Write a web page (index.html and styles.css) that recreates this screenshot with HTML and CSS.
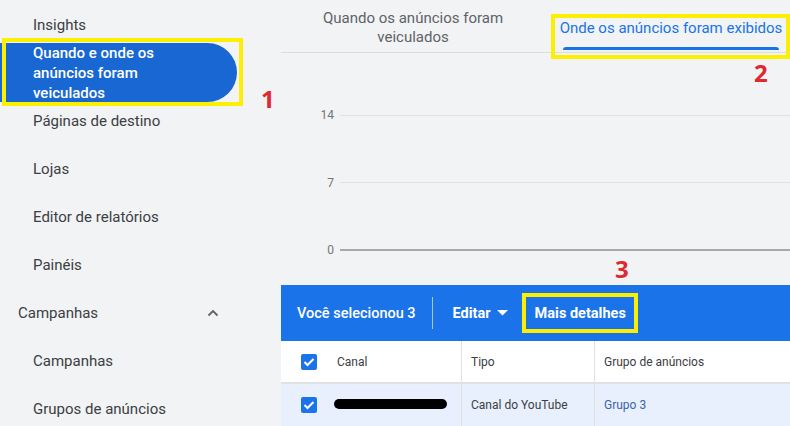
FILE: index.html
```html
<!DOCTYPE html>
<html lang="pt-BR">
<head>
<meta charset="utf-8">
<title>Quando e onde os anúncios foram veiculados</title>
<link rel="stylesheet" href="styles.css">
</head>
<body>
<div class="app">
  <nav class="sidebar">
    <div class="nav-item first">Insights</div>
    <div class="nav-item active">Quando e onde os<br>anúncios foram<br>veiculados</div>
    <div class="nav-item after-active">Páginas de destino</div>
    <div class="nav-item">Lojas</div>
    <div class="nav-item">Editor de relatórios</div>
    <div class="nav-item">Painéis</div>
    <div class="nav-item section"><span>Campanhas</span>
      <svg class="chev" width="12" height="8" viewBox="0 0 12 8"><path d="M1.5 6.5 L6 2 L10.5 6.5" fill="none" stroke="#5f6368" stroke-width="1.8"/></svg>
    </div>
    <div class="nav-item">Campanhas</div>
    <div class="nav-item">Grupos de anúncios</div>
  </nav>

  <main class="main">
    <div class="tabs">
      <div class="tab">Quando os anúncios foram<br>veiculados</div>
      <div class="tab tab-active"><span class="tab-label">Onde os anúncios foram exibidos</span><span class="indicator"></span></div>
    </div>

    <div class="chart">
      <div class="grid-row"><span class="axis">14</span><span class="gridline"></span></div>
      <div class="grid-row"><span class="axis">7</span><span class="gridline"></span></div>
      <div class="grid-row"><span class="axis">0</span><span class="gridline base"></span></div>
    </div>

    <div class="actionbar">
      <span class="selected">Você selecionou 3</span>
      <span class="vdivider"></span>
      <span class="edit">Editar
        <svg width="11" height="6" viewBox="0 0 11 6"><path d="M0 0 H11 L5.5 5.5 Z" fill="#fff"/></svg>
      </span>
      <span class="details">Mais detalhes</span>
    </div>

    <div class="table">
      <div class="trow thead">
        <div class="cell first-cell"><span class="cbox"><svg width="12" height="10" viewBox="0 0 12 10"><path d="M1.5 5 L4.5 8 L10.5 2" fill="none" stroke="#fff" stroke-width="2"/></svg></span><span>Canal</span></div>
        <div class="cell">Tipo</div>
        <div class="cell">Grupo de anúncios</div>
      </div>
      <div class="trow tbody">
        <div class="cell first-cell"><span class="cbox"><svg width="12" height="10" viewBox="0 0 12 10"><path d="M1.5 5 L4.5 8 L10.5 2" fill="none" stroke="#fff" stroke-width="2"/></svg></span><span class="redact"></span></div>
        <div class="cell">Canal do YouTube</div>
        <div class="cell link">Grupo 3</div>
      </div>
    </div>
  </main>

  <div class="mark mark-1"></div>
  <div class="mark mark-2"></div>
  <div class="mark mark-3"></div>
  <span class="num num-1">1</span>
  <span class="num num-2">2</span>
  <span class="num num-3">3</span>
</div>
</body>
</html>
```

FILE: styles.css
```css
* { box-sizing: border-box; }
html, body { margin: 0; padding: 0; }
body {
  background: #f1f3f4;
  font-family: Roboto, "Liberation Sans", Arial, sans-serif;
  color: #3c4043;
  width: 790px;
  height: 426px;
  overflow: hidden;
}
.app {
  position: relative;
  display: flex;
  width: 790px;
  height: 426px;
}

/* Sidebar */
.sidebar {
  width: 281px;
  flex: 0 0 281px;
  display: flex;
  flex-direction: column;
  background: #f1f3f4;
}
.nav-item {
  height: 48px;
  flex: 0 0 auto;
  padding-left: 33px;
  font-size: 15px;
  line-height: 20px;
  padding-top: 14px;
  color: #3c4043;
  white-space: nowrap;
}
.nav-item.first { height: 43px; padding-top: 15px; }
.nav-item.active {
  height: 59px;
  padding-top: 0;
  margin-right: 44px;
  background: #1967d2;
  color: #fff;
  font-weight: 500;
  border-radius: 0 30px 30px 0;
}
.nav-item.after-active { height: 43px; padding-top: 9px; }
.nav-item.section {
  padding-left: 18px;
  display: flex;
  align-items: flex-start;
  justify-content: space-between;
  padding-right: 62px;
}
.chev { margin-top: 6px; }

/* Main */
.main {
  flex: 1 1 auto;
  display: flex;
  flex-direction: column;
  min-width: 0;
}
.tabs {
  height: 53px;
  display: flex;
  border-bottom: 1px solid #dadce0;
}
.tab {
  width: 264px;
  text-align: center;
  font-size: 15px;
  line-height: 19px;
  color: #5f6368;
  padding-top: 9px;
}
.tab-active {
  flex: 1 1 auto;
  width: auto;
  color: #1a73e8;
  padding-top: 19px;
  padding-left: 7px;
  display: flex;
  flex-direction: column;
  align-items: center;
}
.tab-label { display: block; }
.indicator {
  display: block;
  margin-top: 9px;
  width: 216px;
  height: 3px;
  background: #1a73e8;
  border-radius: 3px 3px 0 0;
}

.chart {
  height: 232px;
  display: flex;
  flex-direction: column;
  padding-top: 52px;
  gap: 47.5px;
}
.grid-row {
  height: 20px;
  display: flex;
  align-items: center;
}
.axis {
  width: 53px;
  text-align: right;
  font-size: 12px;
  color: #757575;
  margin-right: 6px;
}
.gridline {
  flex: 1 1 auto;
  height: 1px;
  background: #e0e0e0;
}
.gridline.base { height: 2px; background: #a8a8a8; }

.actionbar {
  height: 56px;
  background: #1a73e8;
  color: #fff;
  display: flex;
  align-items: center;
  padding-left: 16px;
  font-size: 14.5px;
  font-weight: 500;
}
.vdivider {
  width: 1px;
  height: 32px;
  background: rgba(255,255,255,0.6);
  margin: 0 20px 0 16px;
}
.edit { display: flex; align-items: center; gap: 6px; font-weight: 700; }
.details { margin-left: 27px; font-weight: 700; }

.table { background: #fff; flex: 1 1 auto; }
.trow {
  display: grid;
  grid-template-columns: 180px 133px 1fr;
  height: 42px;
  font-size: 12px;
}
.thead { border-bottom: 2px solid #dfe1e5; height: 43px; background: #fff; }
.tbody { background: #e8f0fe; }
.cell {
  display: flex;
  align-items: center;
  padding-left: 9px;
  border-left: 1px solid #e0e0e0;
  color: #3c4043;
}
.cell:first-child { border-left: none; }
.first-cell { padding-left: 20px; }
.cbox {
  width: 16px;
  height: 16px;
  border-radius: 2px;
  background: #1a73e8;
  display: inline-flex;
  align-items: center;
  justify-content: center;
  margin-right: 20px;
}
.redact {
  display: block;
  width: 113px;
  height: 10px;
  background: #000;
  border-radius: 5px;
  margin-left: -3px;
  margin-top: -2px;
}
.link { color: #3b62b0; }

/* Annotations */
.mark {
  position: absolute;
  border: 4px solid #fcf000;
}
.mark-1 { left: 2px; top: 38px; width: 241px; height: 68px; }
.mark-2 { left: 551px; top: 14px; width: 239px; height: 45px; }
.mark-3 { left: 522px; top: 293px; width: 116px; height: 40px; }
.num {
  position: absolute;
  color: #e0282e;
  font-family: "Open Sans", "DejaVu Sans", sans-serif;
  font-weight: 700;
  font-size: 24px;
  line-height: 24px;
}
.num-1 { left: 261px; top: 87px; }
.num-2 { left: 754px; top: 61px; }
.num-3 { left: 615px; top: 257px; }
```
